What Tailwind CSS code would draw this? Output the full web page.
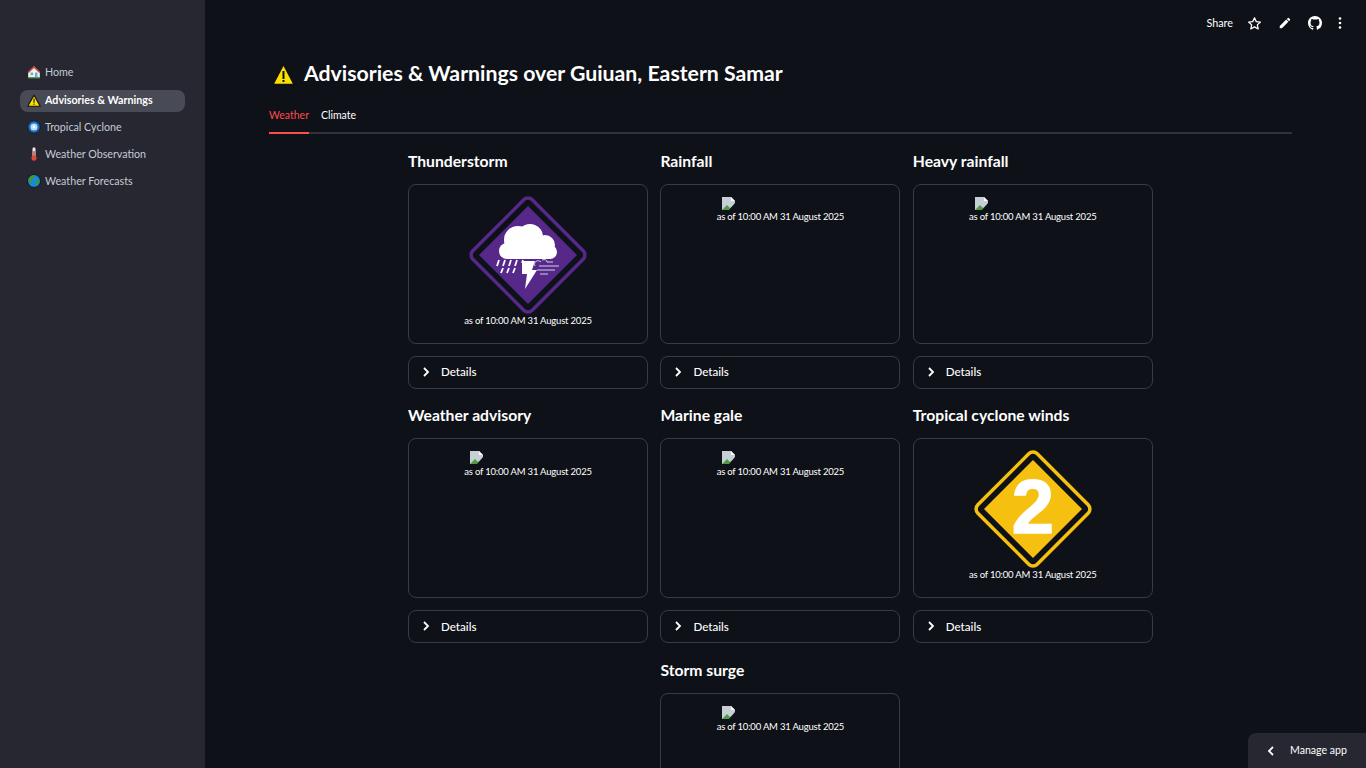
<!DOCTYPE html>
<html lang="en">
<head>
<meta charset="UTF-8">
<title>Advisories & Warnings</title>
<script src="https://cdn.jsdelivr.net/npm/@tailwindcss/browser@4"></script>
</head>
<body class="h-screen overflow-hidden bg-[#0e1117] text-white font-['Lato',sans-serif]">
<div class="flex h-[768px] relative">
  <!-- Sidebar -->
  <aside class="w-[205px] shrink-0 bg-[#262730] pt-[62px] px-5">
    <nav class="flex flex-col text-[10.7px] text-[#c4cbd6]">
      <a class="flex items-center h-[22px] pb-[2px] mb-[6px] pl-[7px] gap-[4px]">
        <svg class="w-[14px] h-[14px] shrink-0" viewBox="0 0 12 12"><path d="M1 6 6 1l5 5v5H1z" fill="#f4f1ea"/><path d="M0.5 6.200 6 .8l5.500 5.400-1 .6L6 2.600 1.500 6.800z" fill="#c8443c"/><rect x="1" y="10.500" width="10" height="1.200" fill="#3b7d3a"/><rect x="3" y="6.500" width="2.200" height="2.200" fill="#5fb0e0"/><rect x="6.800" y="6.500" width="2.200" height="4" fill="#5fb0e0"/></svg>
        <span>Home</span>
      </a>
      <a class="flex items-center h-[22px] pb-[2px] mb-[5px] pl-[7px] gap-[4px] rounded-lg bg-[#484a55] text-white font-bold">
        <svg class="w-[14px] h-[13px] shrink-0" viewBox="0 0 13 12"><path d="M6.500 1 12.300 11.300H.7z" fill="#fde000" stroke="#111" stroke-width="1" stroke-linejoin="round"/><rect x="6" y="4.300" width="1" height="3.800" fill="#111"/><rect x="6" y="8.900" width="1" height="1.100" fill="#111"/></svg>
        <span>Advisories &amp; Warnings</span>
      </a>
      <a class="flex items-center h-[22px] pb-[2px] mb-[5px] pl-[7px] gap-[4px]">
        <svg class="w-[14px] h-[14px] shrink-0" viewBox="0 0 12 12"><circle cx="6" cy="6" r="5.300" fill="#1f6fc4" stroke="#0b1c33" stroke-width=".8"/><circle cx="6" cy="6" r="3" fill="#b9e2fb"/><circle cx="6" cy="6" r="1" fill="#fff"/></svg>
        <span>Tropical Cyclone</span>
      </a>
      <a class="flex items-center h-[22px] pb-[2px] mb-[5px] pl-[7px] gap-[4px]">
        <svg class="w-[14px] h-[14px] shrink-0" viewBox="0 0 12 12"><rect x="4.700" y=".3" width="2.600" height="8" rx="1.300" fill="#f0e9e4"/><circle cx="6" cy="9.500" r="2.200" fill="#e04a38"/><rect x="5.400" y="3.500" width="1.200" height="5" fill="#d9412f"/></svg>
        <span>Weather Observation</span>
      </a>
      <a class="flex items-center h-[22px] pb-[2px] pl-[7px] gap-[4px]">
        <svg class="w-[14px] h-[14px] shrink-0" viewBox="0 0 12 12"><circle cx="6" cy="6" r="5.500" fill="#1d88d8" stroke="#08131f" stroke-width=".8"/><path d="M1 5C2 2 5 .6 7 1c.5 1-1 2.500-2 3S4 7 3 7.500 1 6.500 1 5z" fill="#3e9a34"/><path d="M8 6c1.500-.5 2.500 0 3 .5-.3 1.500-1.200 2.800-2.500 3.500C8 9 7.500 7 8 6z" fill="#3e9a34"/></svg>
        <span>Weather Forecasts</span>
      </a>
    </nav>
  </aside>

  <!-- Main -->
  <main class="flex-1 min-w-0 relative">
    <header class="h-[46px] flex items-center justify-end gap-[16px] pr-[24px]">
      <span class="text-[10.8px] mr-[-2px]">Share</span>
      <svg class="w-[15px] h-[15px]" viewBox="0 0 24 24" fill="none" stroke="white" stroke-width="2" stroke-linejoin="round"><path d="M12 2.800l2.800 6.200 6.700.7-5 4.500 1.400 6.600L12 17.400l-5.900 3.400 1.400-6.600-5-4.500 6.700-.7z"/></svg>
      <svg class="w-[14px] h-[14px]" viewBox="0 0 24 24" fill="white"><path d="M3 17.250V21h3.750L17.810 9.940l-3.750-3.750L3 17.250zM20.710 7.040a1 1 0 000-1.410l-2.340-2.340a1 1 0 00-1.410 0l-1.830 1.830 3.750 3.750 1.830-1.830z"/></svg>
      <svg class="w-[14px] h-[14px]" viewBox="0 0 16 16" fill="white"><path d="M8 0C3.580 0 0 3.580 0 8c0 3.540 2.290 6.530 5.470 7.590.4.070.55-.17.55-.38 0-.19-.01-.82-.01-1.490-2.010.37-2.530-.49-2.690-.94-.09-.23-.48-.94-.82-1.130-.28-.15-.68-.52-.01-.53.63-.01 1.080.58 1.230.82.72 1.210 1.870.87 2.330.66.07-.52.28-.87.51-1.070-1.780-.2-3.640-.89-3.640-3.950 0-.87.31-1.590.82-2.150-.08-.2-.36-1.020.08-2.120 0 0 .67-.21 2.200.82.64-.18 1.320-.27 2-.27.68 0 1.360.09 2 .27 1.530-1.040 2.200-.82 2.200-.82.44 1.100.16 1.920.08 2.120.51.56.82 1.270.82 2.150 0 3.070-1.870 3.750-3.650 3.950.29.25.54.73.54 1.480 0 1.070-.01 1.930-.01 2.200 0 .21.15.46.55.38A8.013 8.013 0 0016 8c0-4.420-3.580-8-8-8z"/></svg>
      <svg class="w-[4px] h-[14px]" viewBox="0 0 4 14" fill="white"><circle cx="2" cy="2.500" r="1.300"/><circle cx="2" cy="7" r="1.300"/><circle cx="2" cy="11.500" r="1.300"/></svg>
    </header>

    <div class="pl-[64px] pr-[74px]">
      <h1 class="flex items-center gap-[9px] pl-[3px] h-[56px] -mb-[2px] text-[21.25px] font-bold">
        <svg class="w-[23px] h-[23px] shrink-0" viewBox="0 0 23 23"><path d="M11.500 1.500 22 21.500H1z" fill="#fde000" stroke="#111" stroke-width="1.500" stroke-linejoin="round"/><rect x="10.500" y="8" width="2" height="8" fill="#111"/><rect x="10.500" y="17" width="2" height="2" fill="#111"/></svg>
        <span>Advisories &amp; Warnings over Guiuan, Eastern Samar</span>
      </h1>

      <div class="flex gap-3 h-[34px] border-b-2 border-[#31333c] text-[10.5px]">
        <span class="h-[34px] leading-[30px] text-[#ff4b4b] border-b-2 border-[#ff4b4b]">Weather</span>
        <span class="leading-[30px] text-white">Climate</span>
      </div>

      <div class="w-[745px] mx-auto grid grid-cols-[240px_240px_240px] gap-x-[12.4px] gap-y-[14.5px] pt-[14.5px] items-start">
        <!-- Thunderstorm -->
        <section>
          <h3 class="h-[24px] leading-[24px] mb-[11px] text-[15.7px] font-bold">Thunderstorm</h3>
          <div class="h-[160px] rounded-lg border border-[#393b44] pt-[11px] flex flex-col items-center">
            <svg class="w-[118px] h-[118px] shrink-0" viewBox="0 0 118 118">
              <rect x="17" y="17" width="84" height="84" rx="6" transform="rotate(45 59 59)" fill="none" stroke="#55288a" stroke-width="3.500"/>
              <path d="M59 10 108 59 59 108 10 59z" fill="#55288a"/>
              <g fill="white">
                <circle cx="38" cy="55" r="8"/><circle cx="49" cy="44" r="14"/><circle cx="61" cy="41" r="13"/><circle cx="76" cy="49" r="10"/><circle cx="81" cy="56" r="7"/><rect x="38" y="46" width="43" height="17"/>
                <path d="M53 65h13l-3 9h5L56 93l2-15h-5z"/>
              </g>
              <g stroke="white" stroke-width="1.800"><path d="M30 64l-2 6M36 64l-2 6M42 64l-2 6M48 64l-2 6M54 64l-1 3M34 72l-2 5M40 72l-2 5M46 72l-2 5"/></g>
              <g fill="none" stroke="#d9cfe8" stroke-width="1"><path d="M66 70c-2-4 3-7 6-4M70 70h20M68 74h18M73 64c3-1 5 0 5 2h6M71 78h8"/></g>
            </svg>
            <p class="text-[9.5px] leading-[14px] tracking-[-0.2px]">as of 10:00 AM 31 August 2025</p>
          </div>
          <div class="mt-[12px] h-[33px] rounded-lg border border-[#393b44] flex items-center pl-[12px] gap-[11px] text-[11.6px] font-medium">
            <svg class="w-[9px] h-[10px] -mt-px" viewBox="0 0 9 10" fill="none" stroke="white" stroke-width="1.800"><path d="M3 1l4 4-4 4"/></svg><span>Details</span>
          </div>
        </section>
        <!-- Rainfall -->
        <section>
          <h3 class="h-[24px] leading-[24px] mb-[11px] text-[15.7px] font-bold">Rainfall</h3>
          <div class="h-[160px] rounded-lg border border-[#393b44] pt-[12px] flex flex-col items-center">
            <div class="w-[116px] h-[14px] shrink-0"><svg class="w-[14px] h-[14px]" viewBox="0 0 14 14"><path d="M0 0h9l4 4v9H0z" fill="#c6ced6"/><path d="M0 13 5 8l3 3 3-2 2 2v2z" fill="#4f9a42"/><path d="M9 0 13 4H9z" fill="#fff"/><path d="M7 13 13 6v7z" fill="#0e1117"/></svg></div>
            <p class="text-[9.5px] leading-[14px] tracking-[-0.2px] -mt-[1px]">as of 10:00 AM 31 August 2025</p>
          </div>
          <div class="mt-[12px] h-[33px] rounded-lg border border-[#393b44] flex items-center pl-[12px] gap-[11px] text-[11.6px] font-medium">
            <svg class="w-[9px] h-[10px] -mt-px" viewBox="0 0 9 10" fill="none" stroke="white" stroke-width="1.800"><path d="M3 1l4 4-4 4"/></svg><span>Details</span>
          </div>
        </section>
        <!-- Heavy rainfall -->
        <section>
          <h3 class="h-[24px] leading-[24px] mb-[11px] text-[15.7px] font-bold">Heavy rainfall</h3>
          <div class="h-[160px] rounded-lg border border-[#393b44] pt-[12px] flex flex-col items-center">
            <div class="w-[116px] h-[14px] shrink-0"><svg class="w-[14px] h-[14px]" viewBox="0 0 14 14"><path d="M0 0h9l4 4v9H0z" fill="#c6ced6"/><path d="M0 13 5 8l3 3 3-2 2 2v2z" fill="#4f9a42"/><path d="M9 0 13 4H9z" fill="#fff"/><path d="M7 13 13 6v7z" fill="#0e1117"/></svg></div>
            <p class="text-[9.5px] leading-[14px] tracking-[-0.2px] -mt-[1px]">as of 10:00 AM 31 August 2025</p>
          </div>
          <div class="mt-[12px] h-[33px] rounded-lg border border-[#393b44] flex items-center pl-[12px] gap-[11px] text-[11.6px] font-medium">
            <svg class="w-[9px] h-[10px] -mt-px" viewBox="0 0 9 10" fill="none" stroke="white" stroke-width="1.800"><path d="M3 1l4 4-4 4"/></svg><span>Details</span>
          </div>
        </section>
        <!-- Weather advisory -->
        <section>
          <h3 class="h-[24px] leading-[24px] mb-[11px] text-[15.7px] font-bold">Weather advisory</h3>
          <div class="h-[160px] rounded-lg border border-[#393b44] pt-[12px] flex flex-col items-center">
            <div class="w-[116px] h-[14px] shrink-0"><svg class="w-[14px] h-[14px]" viewBox="0 0 14 14"><path d="M0 0h9l4 4v9H0z" fill="#c6ced6"/><path d="M0 13 5 8l3 3 3-2 2 2v2z" fill="#4f9a42"/><path d="M9 0 13 4H9z" fill="#fff"/><path d="M7 13 13 6v7z" fill="#0e1117"/></svg></div>
            <p class="text-[9.5px] leading-[14px] tracking-[-0.2px]">as of 10:00 AM 31 August 2025</p>
          </div>
          <div class="mt-[12px] h-[33px] rounded-lg border border-[#393b44] flex items-center pl-[12px] gap-[11px] text-[11.6px] font-medium">
            <svg class="w-[9px] h-[10px] -mt-px" viewBox="0 0 9 10" fill="none" stroke="white" stroke-width="1.800"><path d="M3 1l4 4-4 4"/></svg><span>Details</span>
          </div>
        </section>
        <!-- Marine gale -->
        <section>
          <h3 class="h-[24px] leading-[24px] mb-[11px] text-[15.7px] font-bold">Marine gale</h3>
          <div class="h-[160px] rounded-lg border border-[#393b44] pt-[12px] flex flex-col items-center">
            <div class="w-[116px] h-[14px] shrink-0"><svg class="w-[14px] h-[14px]" viewBox="0 0 14 14"><path d="M0 0h9l4 4v9H0z" fill="#c6ced6"/><path d="M0 13 5 8l3 3 3-2 2 2v2z" fill="#4f9a42"/><path d="M9 0 13 4H9z" fill="#fff"/><path d="M7 13 13 6v7z" fill="#0e1117"/></svg></div>
            <p class="text-[9.5px] leading-[14px] tracking-[-0.2px]">as of 10:00 AM 31 August 2025</p>
          </div>
          <div class="mt-[12px] h-[33px] rounded-lg border border-[#393b44] flex items-center pl-[12px] gap-[11px] text-[11.6px] font-medium">
            <svg class="w-[9px] h-[10px] -mt-px" viewBox="0 0 9 10" fill="none" stroke="white" stroke-width="1.800"><path d="M3 1l4 4-4 4"/></svg><span>Details</span>
          </div>
        </section>
        <!-- Tropical cyclone winds -->
        <section>
          <h3 class="h-[24px] leading-[24px] mb-[11px] text-[15.7px] font-bold">Tropical cyclone winds</h3>
          <div class="h-[160px] rounded-lg border border-[#393b44] pt-[11px] flex flex-col items-center">
            <svg class="w-[118px] h-[118px] shrink-0" viewBox="0 0 118 118">
              <rect x="17" y="17" width="84" height="84" rx="6" transform="rotate(45 59 59)" fill="none" stroke="#f5c00f" stroke-width="3.500"/>
              <path d="M59 10 108 59 59 108 10 59z" fill="#f5c00f"/>
              <text x="59" y="83" text-anchor="middle" font-family="Liberation Sans" font-weight="700" font-size="76" fill="white" stroke="white" stroke-width="1.500">2</text>
            </svg>
            <p class="text-[9.5px] leading-[14px] tracking-[-0.2px]">as of 10:00 AM 31 August 2025</p>
          </div>
          <div class="mt-[12px] h-[33px] rounded-lg border border-[#393b44] flex items-center pl-[12px] gap-[11px] text-[11.6px] font-medium">
            <svg class="w-[9px] h-[10px] -mt-px" viewBox="0 0 9 10" fill="none" stroke="white" stroke-width="1.800"><path d="M3 1l4 4-4 4"/></svg><span>Details</span>
          </div>
        </section>
        <!-- Storm surge -->
        <section class="col-start-2">
          <h3 class="h-[24px] leading-[24px] mb-[11px] text-[15.7px] font-bold">Storm surge</h3>
          <div class="h-[160px] rounded-lg border border-[#393b44] pt-[12px] flex flex-col items-center">
            <div class="w-[116px] h-[14px] shrink-0"><svg class="w-[14px] h-[14px]" viewBox="0 0 14 14"><path d="M0 0h9l4 4v9H0z" fill="#c6ced6"/><path d="M0 13 5 8l3 3 3-2 2 2v2z" fill="#4f9a42"/><path d="M9 0 13 4H9z" fill="#fff"/><path d="M7 13 13 6v7z" fill="#0e1117"/></svg></div>
            <p class="text-[9.5px] leading-[14px] tracking-[-0.2px]">as of 10:00 AM 31 August 2025</p>
          </div>
        </section>
      </div>
    </div>

    <!-- Manage app -->
    <div class="absolute right-0 bottom-0 w-[118px] h-[35px] bg-[#262730] rounded-tl-lg flex items-center pl-[19px] gap-[14px] text-[10.6px]">
      <svg class="w-[9px] h-[10px]" viewBox="0 0 9 10" fill="none" stroke="white" stroke-width="1.800"><path d="M6 1 2 5l4 4"/></svg>
      <span>Manage app</span>
    </div>
  </main>
</div>
</body>
</html>
